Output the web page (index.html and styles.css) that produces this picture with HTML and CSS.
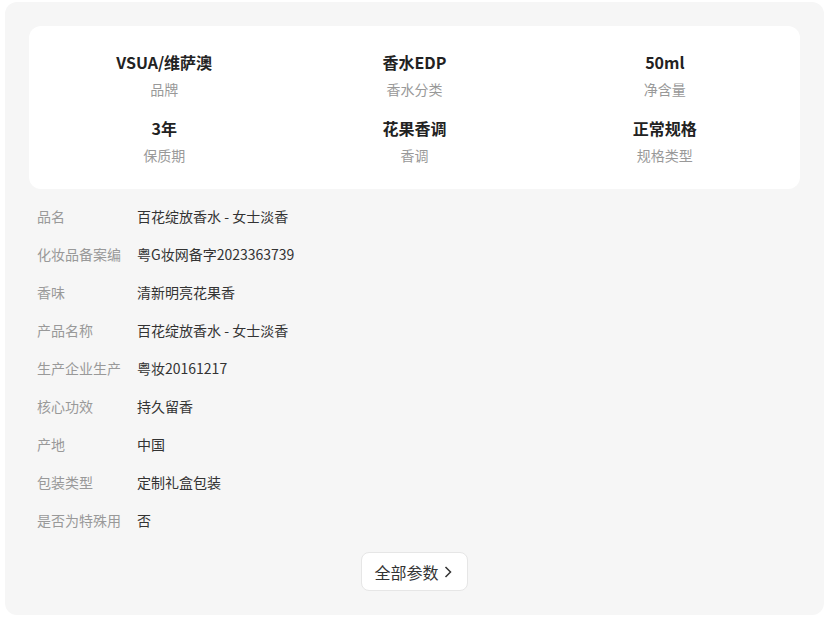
FILE: index.html
```html
<!DOCTYPE html>
<html lang="zh-CN">
<head>
    <meta charset="UTF-8">
    <title>商品参数</title>
    <link rel="stylesheet" href="styles.css">
</head>
<body>

<div class="params-panel">
    <div class="key-card">
        <div class="key-item">
            <div class="key-value">VSUA/维萨澳</div>
            <div class="key-label">品牌</div>
        </div>
        <div class="key-item">
            <div class="key-value">香水EDP</div>
            <div class="key-label">香水分类</div>
        </div>
        <div class="key-item">
            <div class="key-value">50ml</div>
            <div class="key-label">净含量</div>
        </div>
        <div class="key-item">
            <div class="key-value">3年</div>
            <div class="key-label">保质期</div>
        </div>
        <div class="key-item">
            <div class="key-value">花果香调</div>
            <div class="key-label">香调</div>
        </div>
        <div class="key-item">
            <div class="key-value">正常规格</div>
            <div class="key-label">规格类型</div>
        </div>
    </div>

    <div class="param-list">
        <div class="param-row"><span class="param-name">品名</span><span class="param-value">百花绽放香水 - 女士淡香</span></div>
        <div class="param-row"><span class="param-name" title="化妆品备案编号">化妆品备案编</span><span class="param-value">粤G妆网备字2023363739</span></div>
        <div class="param-row"><span class="param-name">香味</span><span class="param-value">清新明亮花果香</span></div>
        <div class="param-row"><span class="param-name">产品名称</span><span class="param-value">百花绽放香水 - 女士淡香</span></div>
        <div class="param-row"><span class="param-name" title="生产企业生产许可证">生产企业生产</span><span class="param-value">粤妆20161217</span></div>
        <div class="param-row"><span class="param-name">核心功效</span><span class="param-value">持久留香</span></div>
        <div class="param-row"><span class="param-name">产地</span><span class="param-value">中国</span></div>
        <div class="param-row"><span class="param-name">包装类型</span><span class="param-value">定制礼盒包装</span></div>
        <div class="param-row"><span class="param-name" title="是否为特殊用途化妆品">是否为特殊用</span><span class="param-value">否</span></div>
    </div>

    <div class="more-wrap">
        <button class="more-btn">全部参数
            <svg class="chevron" width="10" height="14" viewBox="0 0 10 14"><polyline points="2.5,2 7.5,7 2.5,12" fill="none" stroke="#333" stroke-width="1.5"/></svg>
        </button>
    </div>
</div>

</body>
</html>
```

FILE: styles.css
```css
body, html {
    margin: 0;
    padding: 0;
    font-family: "Noto Sans CJK SC", "Noto Sans", sans-serif;
    background: #fff;
}

body {
    padding: 2px 4px 0 5px;
}

.params-panel {
    background: #f6f6f6;
    border-radius: 12px;
    padding: 24px 24px 23px;
    height: 613px;
    box-sizing: border-box;
}

.key-card {
    background: #fff;
    border-radius: 12px;
    padding: 26px 10px 24px;
    display: grid;
    grid-template-columns: repeat(3, 1fr);
    row-gap: 19px;
}

.key-item {
    text-align: center;
}

.key-value {
    font-size: 16px;
    font-weight: bold;
    color: #222;
    line-height: 20px;
}

.key-label {
    font-size: 14px;
    color: #999;
    line-height: 20px;
    margin-top: 7px;
}

.param-list {
    margin-top: 8px;
    padding-left: 8px;
}

.param-row {
    display: flex;
    align-items: center;
    height: 38px;
    font-size: 14px;
}

.param-name {
    width: 84px;
    margin-right: 16px;
    flex-shrink: 0;
    color: #999;
    white-space: nowrap;
    overflow: hidden;
}

.param-value {
    color: #333;
}

.more-wrap {
    display: flex;
    justify-content: center;
    margin-top: 13px;
}

.more-btn {
    display: flex;
    align-items: center;
    gap: 4px;
    height: 39px;
    padding: 0 14px 0 12px;
    background: #fff;
    border: 1px solid #e6e6e6;
    border-radius: 8px;
    font-family: inherit;
    font-size: 16px;
    color: #333;
    cursor: pointer;
}

.chevron {
    display: block;
}
```
